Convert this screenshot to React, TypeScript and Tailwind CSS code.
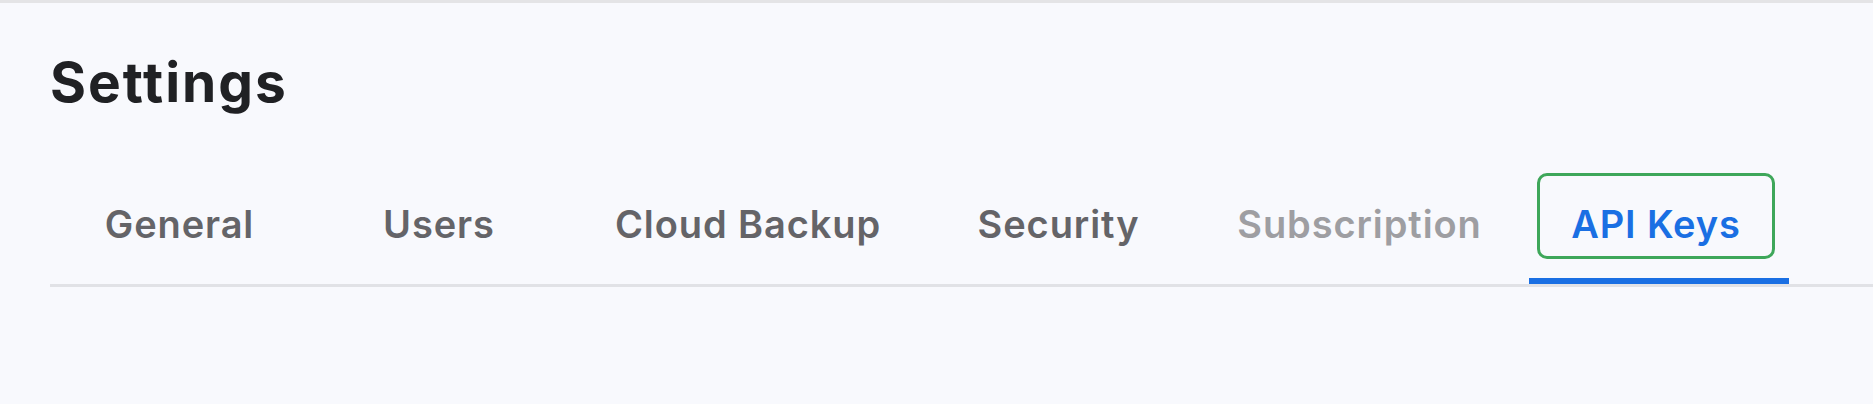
const tabs = [
    { label: "General", width: "w-[259px]", tone: "text-[#646468]" },
    { label: "Users", width: "w-[260px]", tone: "text-[#646468]" },
    { label: "Cloud Backup", width: "w-[358px]", tone: "text-[#646468]" },
    { label: "Security", width: "w-[263px]", tone: "text-[#646468]" },
    { label: "Subscription", width: "w-[339px]", tone: "text-[#9e9ea2]" },
]

export default function App() {
    return (
        <div className="min-h-screen bg-[#f8f9fd] border-t-[3px] border-[#e4e4e6] font-['Inter',sans-serif]">
            <div className="pl-[50px]">
                <h1 className="pt-[52px] text-[55px] leading-none font-bold tracking-[2px] text-[#202124]">Settings</h1>
                <div className="mt-[63px] flex border-b-[3px] border-[#e1e2e6]">
                    {tabs.map((tab) => (
                        <div key={tab.label} className={`${tab.width} flex flex-col`}>
                            <div className={`h-[86px] pt-[15px] flex items-center justify-center text-[38px] leading-none font-semibold tracking-[0.9px] ${tab.tone}`}>
                                {tab.label}
                            </div>
                            <div className="mt-[19px] h-[6px]" />
                        </div>
                    ))}
                    <div className="w-[260px] flex flex-col">
                        <div className="ml-[8px] w-[238px] h-[86px] pt-[15px] flex items-center justify-center border-[3px] border-[#3ea75a] rounded-[10px] text-[38px] leading-none font-semibold tracking-[0.9px] text-[#1a6fe3]">
                            API Keys
                        </div>
                        <div className="mt-[19px] h-[6px] bg-[#1a6fe3]" />
                    </div>
                </div>
            </div>
        </div>
    )
}
